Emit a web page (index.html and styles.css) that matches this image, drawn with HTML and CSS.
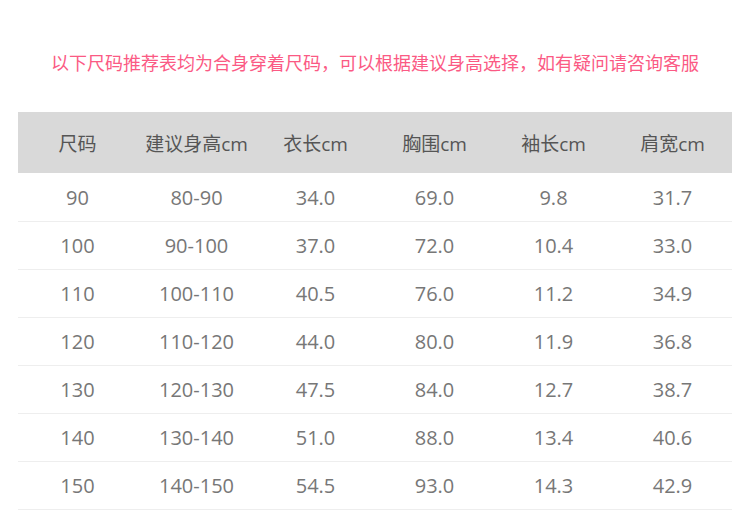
FILE: index.html
```html
<!DOCTYPE html>
<html lang="zh">
<head>
<meta charset="utf-8">
<link rel="stylesheet" href="styles.css">
</head>
<body>
<p class="note">以下尺码推荐表均为合身穿着尺码，可以根据建议身高选择，如有疑问请咨询客服</p>
<table class="size-table">
  <thead>
    <tr><th>尺码</th><th>建议身高cm</th><th>衣长cm</th><th>胸围cm</th><th>袖长cm</th><th>肩宽cm</th></tr>
  </thead>
  <tbody>
    <tr><td>90</td><td>80-90</td><td>34.0</td><td>69.0</td><td>9.8</td><td>31.7</td></tr>
    <tr><td>100</td><td>90-100</td><td>37.0</td><td>72.0</td><td>10.4</td><td>33.0</td></tr>
    <tr><td>110</td><td>100-110</td><td>40.5</td><td>76.0</td><td>11.2</td><td>34.9</td></tr>
    <tr><td>120</td><td>110-120</td><td>44.0</td><td>80.0</td><td>11.9</td><td>36.8</td></tr>
    <tr><td>130</td><td>120-130</td><td>47.5</td><td>84.0</td><td>12.7</td><td>38.7</td></tr>
    <tr><td>140</td><td>130-140</td><td>51.0</td><td>88.0</td><td>13.4</td><td>40.6</td></tr>
    <tr><td>150</td><td>140-150</td><td>54.5</td><td>93.0</td><td>14.3</td><td>42.9</td></tr>
  </tbody>
</table>
</body>
</html>
```
FILE: styles.css
```css
html, body {
  margin: 0;
  padding: 0;
  background: #fff;
}
body {
  width: 750px;
  font-family: "Open Sans", "Noto Sans CJK SC", sans-serif;
}
.note {
  margin: 50px 0 0;
  text-align: center;
  font-family: "Noto Sans CJK SC", sans-serif;
  font-size: 18px;
  line-height: 24px;
  color: #fb5a84;
}
.size-table {
  margin: 38px 0 0 18px;
  width: 714px;
  border-collapse: collapse;
  table-layout: fixed;
}
.size-table th {
  height: 61px;
  padding: 0;
  background: #d9d9d9;
  border-bottom: 1px solid #fff;
  font-weight: normal;
  font-size: 19px;
  color: #555;
}
.size-table td {
  height: 47px;
  padding: 0;
  text-align: center;
  font-size: 20px;
  color: #777;
  border-bottom: 1px solid #eee;
}
```
